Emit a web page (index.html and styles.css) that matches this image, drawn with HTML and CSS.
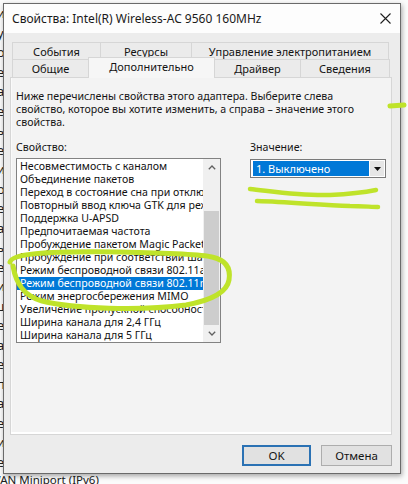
FILE: index.html
```html
<!DOCTYPE html>
<html lang="ru">
<head>
<meta charset="utf-8">
<title>Свойства: Intel(R) Wireless-AC 9560 160MHz</title>
<link rel="stylesheet" href="styles.css">
</head>
<body>
<div class="strip">
  <div class="bline">и</div>
  <div class="bline">у</div>
  <div class="bline">о</div>
  <div class="bline">е</div>
  <div class="bline">а</div>
  <div class="bline">е</div>
  <div class="bline">ы</div>
  <div class="bline">е</div>
  <div class="bline">и</div>
  <div class="bline">о</div>
  <div class="bline">е</div>
  <div class="bline">а</div>
  <div class="bline">ы</div>
  <div class="bline">е</div>
  <div class="bline">и</div>
  <div class="bline">ш</div>
  <div class="bline">е</div>
  <div class="bline">а</div>
  <div class="bline">е</div>
  <div class="bline">п</div>
  <div class="bline">а</div>
  <div class="bline">е</div>
  <div class="bline">и</div>
  <div class="bline">е</div>
</div>
<div class="bottom-line">WAN Miniport (IPv6)</div>

<div class="dialog">
  <div class="titlebar">
    <span class="title">Свойства: Intel(R) Wireless-AC 9560 160MHz</span>
    <svg class="close" width="11" height="11" viewBox="0 0 11 11"><path d="M0.5 0.5 L10.5 10.5 M10.5 0.5 L0.5 10.5" stroke="#1e1e1e" stroke-width="1.1" fill="none"/></svg>
  </div>
  <div class="content">
    <div class="tabs">
      <div class="tabrow row1">
        <div class="tab w-events">События</div>
        <div class="tab w-res">Ресурсы</div>
        <div class="tab w-power">Управление электропитанием</div>
      </div>
      <div class="tabrow row2">
        <div class="tab w-general">Общие</div>
        <div class="tab w-adv selected">Дополнительно</div>
        <div class="tab w-driver">Драйвер</div>
        <div class="tab w-info">Сведения</div>
      </div>
    </div>
    <div class="panel">
      <p class="desc">Ниже перечислены свойства этого адаптера. Выберите слева свойство, которое вы хотите изменить, а справа – значение этого свойства.</p>
      <div class="cols">
        <div class="col">
          <div class="label">Свойство:</div>
          <div class="listbox">
            <div class="items">
              <div class="item">Несовместимость с каналом</div>
              <div class="item">Объединение пакетов</div>
              <div class="item">Переход в состояние сна при отключении</div>
              <div class="item">Повторный ввод ключа GTK для режима</div>
              <div class="item">Поддержка U-APSD</div>
              <div class="item">Предпочитаемая частота</div>
              <div class="item">Пробуждение пакетом Magic Packet</div>
              <div class="item">Пробуждение при соответствии шаблону</div>
              <div class="item">Режим беспроводной связи 802.11a/b/g</div>
              <div class="item sel">Режим беспроводной связи 802.11n/ac/ax</div>
              <div class="item">Режим энергосбережения MIMO</div>
              <div class="item">Увеличение пропускной способности</div>
              <div class="item">Ширина канала для 2,4 ГГц</div>
              <div class="item">Ширина канала для 5 ГГц</div>
            </div>
            <div class="scrollbar">
              <div class="sb-btn"><svg width="8" height="5" viewBox="0 0 8 5"><path d="M0.8 4.2 L4 1 L7.2 4.2" stroke="#606060" stroke-width="1.3" fill="none"/></svg></div>
              <div class="sb-track"><div class="sb-thumb"></div></div>
              <div class="sb-btn"><svg width="8" height="5" viewBox="0 0 8 5"><path d="M0.8 0.8 L4 4 L7.2 0.8" stroke="#606060" stroke-width="1.3" fill="none"/></svg></div>
            </div>
          </div>
        </div>
        <div class="col">
          <div class="label">Значение:</div>
          <div class="combo">
            <div class="combo-value">1. Выключено</div>
            <div class="combo-btn"><svg width="7" height="4" viewBox="0 0 7 4"><path d="M0 0 L7 0 L3.5 4 Z" fill="#111"/></svg></div>
          </div>
        </div>
      </div>
    </div>
    <div class="buttons">
      <div class="btn default">OK</div>
      <div class="btn">Отмена</div>
    </div>
  </div>
</div>

<svg class="marker" width="408" height="484" viewBox="0 0 408 484">
  <g fill="none" stroke="#bfe32a" stroke-linecap="round" stroke-linejoin="round">
    <path stroke-width="5" d="M10 262 C 12 254, 40 251, 120 252 C 170 253, 200 254, 212 257 C 226 260, 231 268, 229 280 C 227 292, 213 300, 186 305 C 140 311, 75 309, 42 301 C 24 296, 16 284, 13 266"/>
    <path stroke-width="4.5" d="M250 189 C 270 191, 300 196, 330 195 C 350 194, 366 192, 376 190"/>
    <path stroke-width="4.5" d="M257 201 C 290 202, 320 205, 350 206 C 362 206, 372 207, 378 207"/>
    <path stroke-width="5" d="M390 106 L 404 105"/>
  </g>
</svg>
</body>
</html>
```
FILE: styles.css
```css
* { box-sizing: border-box; }

html, body {
  margin: 0;
  padding: 0;
}

body {
  width: 408px;
  height: 484px;
  overflow: hidden;
  position: relative;
  background: #fbfbfb;
  font-family: "Noto Sans", "Open Sans", sans-serif;
  font-size: 10.6px;
  color: #141414;
}

.strip {
  position: absolute;
  left: 0;
  top: 4px;
  width: 3px;
  height: 470px;
  overflow: hidden;
  font-size: 13px;
  line-height: 19.5px;
  color: #202020;
  white-space: nowrap;
}

.bline {
  margin-left: -3px;
  height: 19.5px;
}

.bottom-line {
  position: absolute;
  left: -10px;
  top: 472px;
  font-size: 11.5px;
  line-height: 16px;
  color: #202020;
  white-space: nowrap;
}

.dialog {
  position: absolute;
  left: 3px;
  top: 3px;
  width: 398px;
  height: 471px;
  border: 1px solid #6a6a6a;
  background: #ececec;
  box-shadow: 1px 2px 5px rgba(0, 0, 0, 0.35);
  display: flex;
  flex-direction: column;
  z-index: 2;
}

.titlebar {
  height: 29px;
  background: #fdfdfd;
  display: flex;
  align-items: center;
  padding: 0 9px 0 8px;
  flex: 0 0 auto;
}

.title {
  font-size: 12px;
  color: #1a1a1a;
}

.close {
  margin-left: auto;
}

.content {
  flex: 1 1 auto;
  padding: 9px 8px 0 6px;
  display: flex;
  flex-direction: column;
}

.tabs {
  margin: 0 2px;
}

.tabrow {
  display: flex;
}

.row1 { height: 17px; }
.row2 { height: 18px; align-items: flex-end; }

.tab {
  height: 100%;
  border: 1px solid #d6d6d6;
  border-bottom: none;
  margin-right: -1px;
  background: #ebebeb;
  display: flex;
  align-items: center;
  justify-content: center;
  white-space: nowrap;
  font-size: 11px;
}

.w-events { width: 89px; }
.w-res { width: 92px; }
.w-power { width: 198px; }
.w-general { width: 77px; }
.w-adv { width: 127px; }
.w-driver { width: 87px; }
.w-info { width: 90px; }

.tab.selected {
  height: 21px;
  margin-bottom: -1px;
  background: #f6f6f6;
  position: relative;
  z-index: 1;
  padding-bottom: 3px;
}

.panel {
  height: 358px;
  flex: 0 0 auto;
  background: #f3f3f3;
  border: 1px solid #d6d6d6;
  box-shadow: inset 0 -2px 0 #ffffff, inset 1px 0 0 #fafafa;
  padding: 12px 5px 0 5px;
}

.desc {
  margin: 0;
  line-height: 13px;
  width: 360px;
}

.cols {
  display: grid;
  grid-template-columns: 205px 136px;
  column-gap: 29px;
  margin-top: 12px;
}

.label {
  line-height: 13px;
  height: 13px;
}

.listbox {
  margin-top: 4px;
  height: 185px;
  border: 1px solid #828282;
  background: #ffffff;
  display: flex;
}

.items {
  width: 186px;
  padding-top: 1px;
  overflow: hidden;
}

.item {
  height: 13px;
  line-height: 13px;
  padding-left: 3px;
  white-space: nowrap;
  overflow: hidden;
  color: #111;
}

.item.sel {
  background: #0078d7;
  color: #ffffff;
}

.scrollbar {
  width: 17px;
  background: #f0f0f0;
  display: flex;
  flex-direction: column;
}

.sb-btn {
  height: 17px;
  display: flex;
  align-items: center;
  justify-content: center;
}

.sb-track {
  flex: 1 1 auto;
  padding: 35px 1px 0 1px;
}

.sb-thumb {
  height: 114px;
  background: #cdcdcd;
}

.combo {
  margin-top: 5px;
  height: 19px;
  border: 1px solid #7a7a7a;
  background: #ffffff;
  display: flex;
  padding: 1px;
}

.combo-value {
  flex: 1 1 auto;
  margin: 0 1px 0 1px;
  background: #0078d7;
  color: #ffffff;
  padding-left: 3px;
  line-height: 15px;
  font-size: 11px;
}

.combo-btn {
  width: 14px;
  background: #e6e6e6;
  display: flex;
  align-items: center;
  justify-content: center;
}

.buttons {
  display: flex;
  justify-content: flex-end;
  gap: 10px;
  padding-top: 10px;
}

.btn {
  height: 21px;
  background: #e1e1e1;
  border: 1px solid #adadad;
  display: flex;
  align-items: center;
  justify-content: center;
  width: 71px;
  font-size: 11.5px;
}

.btn.default {
  width: 69px;
  border: 2px solid #2b72b4;
}

.marker {
  position: absolute;
  left: 0;
  top: 0;
  pointer-events: none;
  z-index: 10;
}
```
